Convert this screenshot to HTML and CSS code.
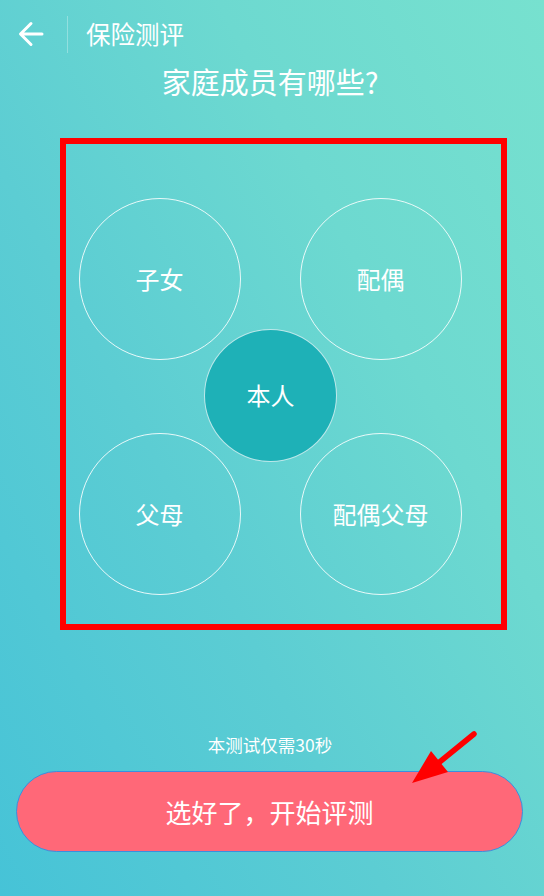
FILE: index.html
```html
<!DOCTYPE html>
<html lang="zh-CN">
<head>
<meta charset="utf-8">
<title>保险测评</title>
<link rel="stylesheet" href="styles.css">
</head>
<body>
<div class="page">
  <header class="header">
    <svg class="back" width="26" height="26" viewBox="0 0 26 26" aria-hidden="true">
      <path d="M24 13 H3 M13 2.5 L2.5 13 L13 23.5" fill="none" stroke="#fff" stroke-width="3" stroke-linecap="round" stroke-linejoin="round"/>
    </svg>
    <span class="divider"></span>
    <h1 class="title">保险测评</h1>
  </header>

  <h2 class="question">家庭成员有哪些?</h2>

  <div class="members">
    <div class="bubble">子女</div>
    <div class="bubble">配偶</div>
    <div class="bubble">父母</div>
    <div class="bubble">配偶父母</div>
    <div class="bubble self">本人</div>
  </div>

  <p class="hint">本测试仅需30秒</p>
  <button class="start">选好了，开始评测</button>
</div>

<div class="mark-box"></div>
<svg class="mark-arrow" width="544" height="896" viewBox="0 0 544 896" aria-hidden="true">
  <line x1="474" y1="734" x2="436" y2="765" stroke="#ff0000" stroke-width="5.5" stroke-linecap="round"/>
  <polygon points="412,783 431,751 448,772" fill="#ff0000"/>
</svg>
</body>
</html>
```

FILE: styles.css
```css
html, body {
  margin: 0;
  padding: 0;
}
body {
  width: 544px;
  height: 896px;
  overflow: hidden;
  position: relative;
  font-family: "Noto Sans CJK SC", "Noto Sans", sans-serif;
  color: #fff;
  background: linear-gradient(62deg, #46c3d7 0%, #5ccdd3 38%, #6dd9d0 68%, #77e1cf 100%);
}
.page {
  width: 540px;
  display: flex;
  flex-direction: column;
}
.header {
  height: 56px;
  padding-top: 6px;
  padding-left: 18px;
  display: flex;
  align-items: center;
}
.back {
  display: block;
  width: 26px;
  height: 26px;
}
.divider {
  width: 1px;
  height: 37px;
  margin-left: 23px;
  background: rgba(255, 255, 255, 0.3);
}
.title {
  margin: 0 0 0 18px;
  font-size: 24.5px;
  font-weight: 400;
  line-height: 30px;
}
.question {
  margin: 2px 0 0;
  font-size: 29px;
  font-weight: 400;
  line-height: 34px;
  text-align: center;
}
.members {
  position: relative;
  margin: 100px auto 0;
  display: grid;
  grid-template-columns: 162px 162px;
  grid-template-rows: 162px 162px;
  column-gap: 59px;
  row-gap: 73px;
}
.bubble {
  box-sizing: border-box;
  border-radius: 50%;
  border: 1.2px solid rgba(255, 255, 255, 0.85);
  display: flex;
  align-items: center;
  justify-content: center;
  font-size: 24px;
  line-height: 1;
}
.bubble.self {
  position: absolute;
  left: 50%;
  top: 50%;
  width: 133px;
  height: 133px;
  margin: -68px 0 0 -66px;
  background: #1eb1b7;
  border: 1px solid rgba(255, 255, 255, 0.7);
}
.hint {
  margin: 138px 0 0;
  font-size: 17.5px;
  line-height: 24px;
  text-align: center;
}
.start {
  box-sizing: border-box;
  margin: 14px 0 0 16px;
  width: 507px;
  height: 81px;
  border-radius: 41px;
  border: 1px solid #3a8fe0;
  background: #ff6878;
  color: #fff;
  font-family: "Noto Sans CJK SC", "Noto Sans", sans-serif;
  font-size: 26px;
  padding: 0;
  letter-spacing: 0;
}
.mark-box {
  position: absolute;
  left: 60px;
  top: 138px;
  width: 447px;
  height: 492px;
  box-sizing: border-box;
  border: 6px solid #ff0000;
}
.mark-arrow {
  position: absolute;
  left: 0;
  top: 0;
}
```
